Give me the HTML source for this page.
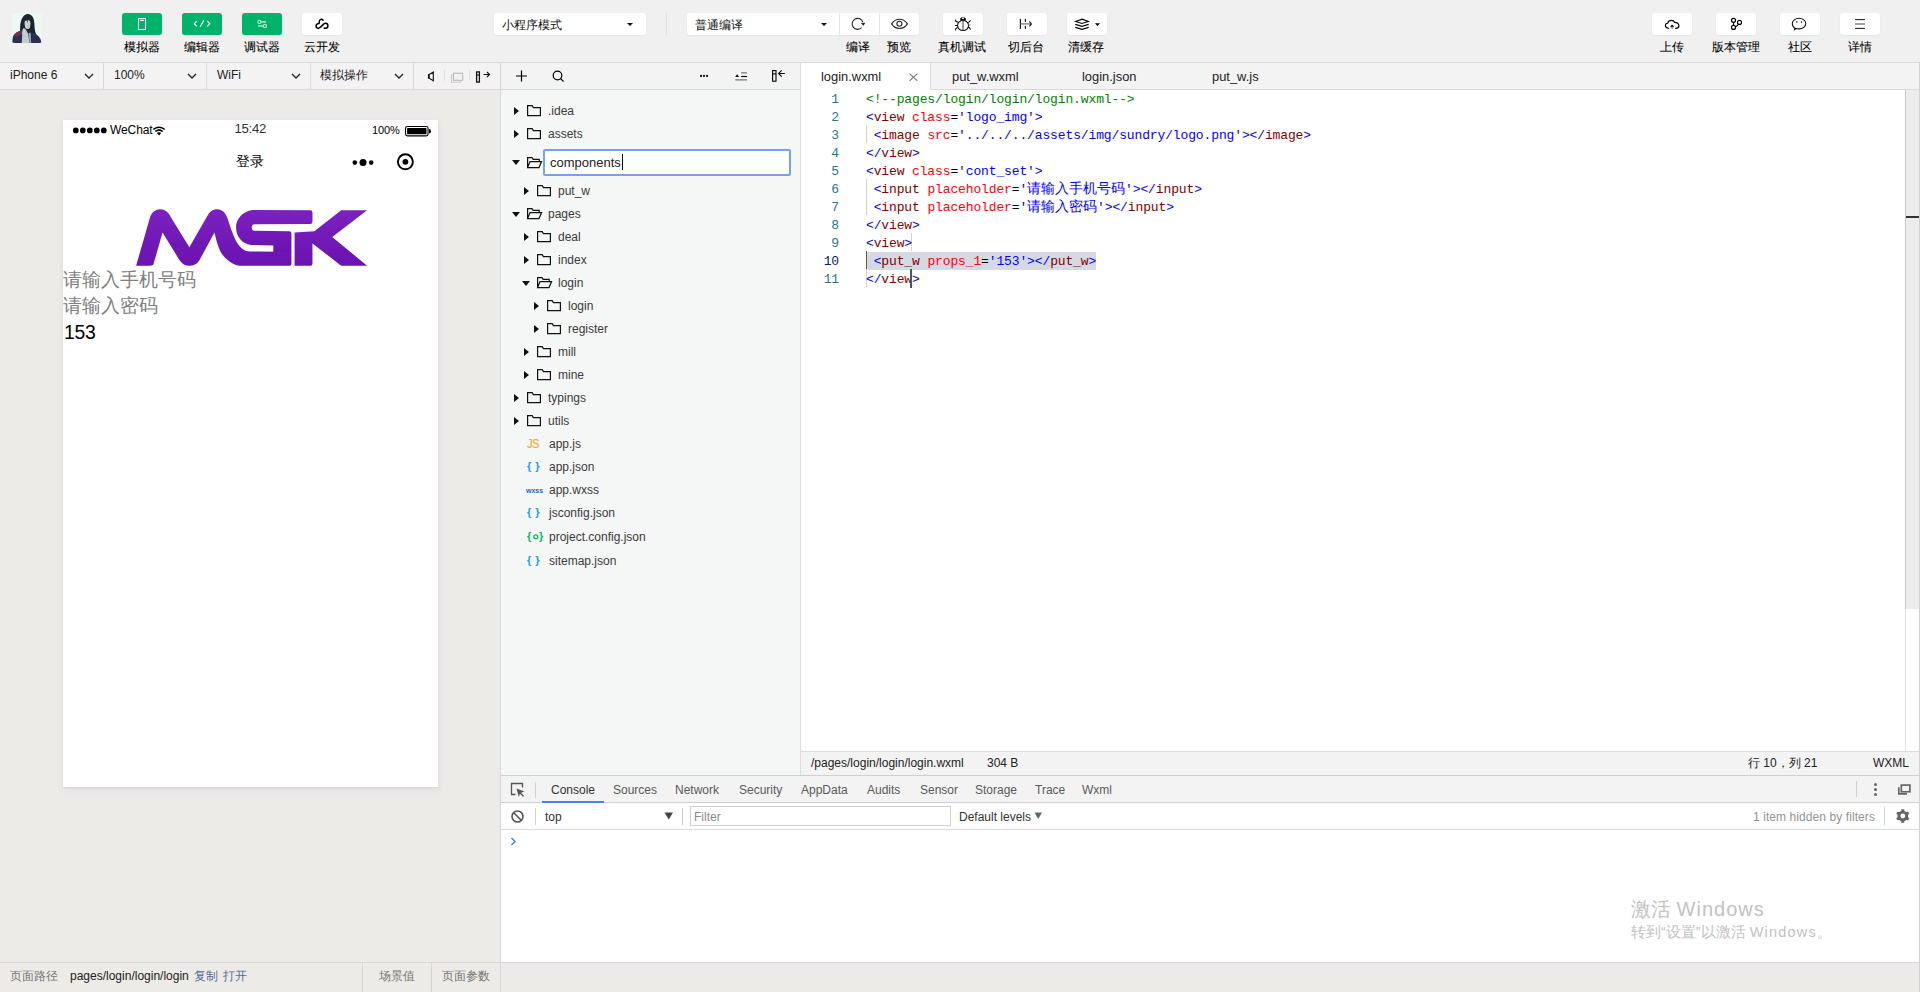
<!DOCTYPE html>
<html><head><meta charset="utf-8">
<style>
*{margin:0;padding:0;box-sizing:border-box}
html,body{width:1920px;height:992px;overflow:hidden;background:#f0f0f0;font-family:"Liberation Sans",sans-serif;font-size:12px;color:#333;position:relative}
.a{position:absolute}
svg{position:absolute;overflow:visible}
.btn{position:absolute;top:13px;width:40px;height:22px;border-radius:3px;background:#fff;box-shadow:0 1px 2px rgba(0,0,0,0.05)}
.g{background:#00b26a}
.lbl{position:absolute;top:40px;width:80px;text-align:center;font-size:12px;color:#000;line-height:14px;-webkit-text-stroke:0.08px #000}
.sel{position:absolute;top:13px;height:22px;border-radius:3px;background:#fff;box-shadow:0 1px 2px rgba(0,0,0,0.05)}
.vsep{position:absolute;width:1px;background:#dcdcdc}
/* bar2 */
.bar2{left:0;top:62px;width:1920px;height:28px;background:#f3f3f3;border-top:1px solid #d9d9d9;border-bottom:1px solid #d9d9d9}
.st{position:absolute;top:68px;font-size:12px;color:#222;line-height:14px}
.sim{left:0;top:90px;width:500px;height:872px;background:#edebe7}
.tree{left:501px;top:90px;width:299px;height:685px;background:#f5f7f6}
.ed{left:801px;top:90px;width:1119px;height:661px;background:#fff}
.bot{left:0;top:962px;width:1920px;height:30px;background:#edebe7;border-top:1px solid #d6d6d6}
.row{position:absolute;font-size:12px;color:#3a3a3a;line-height:14px;white-space:nowrap}
.tri{position:absolute;width:0;height:0;border-top:4px solid transparent;border-bottom:4px solid transparent;border-left:5px solid #111}
.trid{position:absolute;width:0;height:0;border-left:4.5px solid transparent;border-right:4.5px solid transparent;border-top:5px solid #111}
.code{position:absolute;left:866px;font-family:"Liberation Mono",monospace;font-size:13px;letter-spacing:-0.13px;line-height:18px;white-space:pre;color:#000}
.ln{position:absolute;left:810px;width:29px;text-align:right;font-family:"Liberation Mono",monospace;font-size:13px;letter-spacing:-0.13px;line-height:18px;color:#237893}
.cm{color:#008000}.dl{color:#0000ff}.tg{color:#800000}.at{color:#ff0000}.vl{color:#0000ff}
.dt{position:absolute;top:783px;font-size:12px;color:#333;line-height:14px}
</style></head><body>
<!-- ============ TOP TOOLBAR ============ -->
<svg style="left:12px;top:13px" width="30" height="30" viewBox="0 0 30 30">
<defs><clipPath id="avc"><rect width="30" height="30" rx="2.5"/></clipPath></defs>
<g clip-path="url(#avc)">
<rect width="30" height="30" fill="#eff7f3"/>
<path d="M9.5 30 C8.5 24 7.6 18 8.3 12 C8.8 6 11.5 1.2 15.8 0.9 C20 1 22.3 5 22.4 11 C22.5 16 23 20 25.5 24 L26 30 Z" fill="#1c2527"/>
<path d="M12.6 9 C13.2 7.4 15 6.8 16.8 7.2 C18 7.6 18.6 9 18.4 11 L17.9 14.5 C17.3 16 15.5 16.5 14 15.6 C13 14.6 12.5 12.5 12.6 9 Z" fill="#c6d1d6"/>
<path d="M13.5 7.5 C14.5 6.2 15.4 6 15.9 6.2 L15.6 10.5 L14.8 7.6 Z" fill="#2a3437"/>
<path d="M15.2 12.2 L16.4 12.2 L16.2 12.8 L15.3 12.8 Z" fill="#b77b86"/>
<path d="M0 30 L0.8 24.5 C1.5 21 4.5 18.8 8.5 18.2 L11.5 18.5 L19.5 19.5 C23.5 20 26.5 22.5 28.5 26 L29.6 30 Z" fill="#283250"/>
<path d="M2.6 22.5 C3.5 19.5 6.5 17.6 10.2 17.8 L11.2 20.8 C8.6 21.8 6 23 3.8 24.4 Z" fill="#6d2e4f"/>
<path d="M11 15.5 C12.5 14.8 14 16 14.6 18 L16.2 21 L17.5 30 L9.8 30 L10.2 22 C10 19.5 10.2 17 11 15.5 Z" fill="#c4cdd4"/>
<path d="M16.6 20 L17.6 30 L19.2 30 L18.6 19.8 Z" fill="#9ea7b6"/>
</g></svg>
<div class="btn g" style="left:122px"></div>
<svg style="left:122px;top:13px" width="40" height="22"><rect x="16.5" y="5.5" width="7" height="11" fill="none" stroke="#fff" stroke-width="1"/><line x1="18.1" y1="7.4" x2="22" y2="7.4" stroke="#fff" stroke-width="1.3"/></svg>
<div class="btn g" style="left:182px"></div>
<svg style="left:182px;top:13px" width="40" height="22" fill="none" stroke="#fff" stroke-width="1.1"><path d="M14.7 8.2 L12.3 10.75 L14.7 13.3"/><path d="M25.4 8.2 L27.8 10.75 L25.4 13.3"/><path d="M21.8 7.4 L18.1 13.8"/></svg>
<div class="btn g" style="left:242px"></div>
<svg style="left:242px;top:13px" width="40" height="22" fill="none" stroke="#a8e3c8" stroke-width="1.6"><line x1="18.6" y1="8.9" x2="24" y2="8.9"/><line x1="16" y1="13" x2="21.2" y2="13"/><circle cx="17.4" cy="8.9" r="1.6" stroke-width="1.2"/><circle cx="22.9" cy="13" r="1.6" stroke-width="1.2"/></svg>
<div class="btn" style="left:302px"></div>
<svg style="left:302px;top:13px" width="40" height="22" fill="none" stroke="#000" stroke-width="1.5" stroke-linecap="round" stroke-linejoin="round"><path d="M21.1 7.2 C20.4 6.3 19.2 6.1 18.3 6.6 C17.3 7.2 17 8.6 17.1 10.6 C15.6 10.3 14.1 11.4 14.1 13 C14.1 14.3 15.1 15.3 16.3 15.3 C17.2 15.3 17.9 14.8 18.5 14.1 L21.6 11.1 C22.2 10.5 22.8 10.3 23.5 10.3 C24.9 10.3 25.9 11.5 25.9 12.8 C25.9 14.3 24.8 15.3 23.5 15.3 C23 15.3 22.6 15.2 22.2 15"/></svg>
<div class="lbl" style="left:102px">模拟器</div>
<div class="lbl" style="left:162px">编辑器</div>
<div class="lbl" style="left:222px">调试器</div>
<div class="lbl" style="left:282px">云开发</div>

<div class="sel" style="left:494px;width:152px"></div>
<div class="a" style="left:502px;top:17.5px;font-size:12px;color:#111;line-height:14px">小程序模式</div>
<div class="trid" style="left:627px;top:23px;border-left-width:3px;border-right-width:3px;border-top-width:3px"></div>
<div class="vsep" style="left:666px;top:13px;height:22px;background:#dedede"></div>

<div class="sel" style="left:687px;width:232px"></div>
<div class="a" style="left:695px;top:17.5px;font-size:12px;color:#111;line-height:14px">普通编译</div>
<div class="trid" style="left:820.5px;top:23px;border-left-width:3px;border-right-width:3px;border-top-width:3px"></div>
<div class="vsep" style="left:839px;top:13px;height:22px;background:#e6e6e6"></div>
<div class="vsep" style="left:879px;top:13px;height:22px;background:#e6e6e6"></div>
<svg style="left:840px;top:13px" width="40" height="22" fill="none" stroke="#222" stroke-width="1.1"><path d="M22.9 9.2 A5.5 5.5 0 1 0 21.6 14.7"/><path d="M21.3 10.2 L24.9 10.1 L23.3 12.4 Z" fill="#222" stroke-width="0.6"/></svg>
<svg style="left:880px;top:13px" width="40" height="22" fill="none" stroke="#222" stroke-width="1.1"><path d="M11.6 10.9 C13.8 7.6 16.6 6.3 19.5 6.3 C22.4 6.3 25.2 7.6 27.4 10.9 C25.2 14.2 22.4 15.5 19.5 15.5 C16.6 15.5 13.8 14.2 11.6 10.9 Z"/><circle cx="19.4" cy="10.8" r="2.5"/></svg>
<div class="lbl" style="left:818px">编译</div>
<div class="lbl" style="left:859px">预览</div>

<div class="btn" style="left:943px"></div>
<svg style="left:943px;top:13px" width="40" height="22" fill="none" stroke="#000" stroke-width="1.05"><ellipse cx="20.05" cy="12.45" rx="5.5" ry="5.1"/><path d="M17.3 7.3 L17.3 5.6 L18.2 4.6 L21.9 4.6 L22.8 5.6 L22.8 7.3 Z" fill="#000" stroke="none"/><ellipse cx="20.05" cy="5.6" rx="1.3" ry="0.55" fill="#fff" stroke="none"/><line x1="20.05" y1="7.5" x2="20.05" y2="17.3" stroke="#777" stroke-width="1.5"/><path d="M12.4 6.6 L12.9 8.3 L15 9.3 M27.6 7.3 L25.4 9.6 M12.1 12.4 L14.6 12.4 M12.4 17.3 L13 15.3 L14.8 14.4 M27.6 16.5 L26.4 14.7 L25.2 14.2"/><line x1="25.5" y1="12.1" x2="27.6" y2="12.1" stroke="#888" stroke-width="1.3"/></svg>
<div class="btn" style="left:1007px"></div>
<svg style="left:1007px;top:13px" width="40" height="22" fill="none" stroke="#111" stroke-width="1.15" stroke-linecap="round"><line x1="13.4" y1="6.4" x2="13.4" y2="15.4"/><line x1="18.4" y1="6.4" x2="18.4" y2="8.4"/><line x1="18.4" y1="13.4" x2="18.4" y2="15.4"/><line x1="13.6" y1="10.9" x2="23.6" y2="10.9" stroke="#8a8a8a" stroke-width="1.5" stroke-linecap="butt"/><path d="M22.4 8.4 L24.4 10.9 L22.4 13.4" stroke-linecap="butt"/></svg>
<div class="btn" style="left:1067px"></div>
<svg style="left:1067px;top:13px" width="40" height="22" fill="none" stroke="#000" stroke-width="1.1"><path d="M8.6 8.4 L15 6.2 L21.4 8.4 L15 10.4 Z"/><path d="M8.3 11.4 L15 13.4 L21.7 11.4"/><path d="M8.3 14.4 L15 16.4 L21.7 14.4"/><path d="M28 10.3 L33 10.3 L30.5 13.1 Z" fill="#000" stroke="none"/></svg>
<div class="lbl" style="left:922px">真机调试</div>
<div class="lbl" style="left:986px">切后台</div>
<div class="lbl" style="left:1046px">清缓存</div>

<div class="btn" style="left:1652px"></div>
<svg style="left:1652px;top:13px" width="40" height="22" fill="none" stroke="#000" stroke-width="1.15" stroke-linecap="round"><path d="M16.6 15.3 C15 15.1 13.4 14.3 13.4 12.6 C13.4 11.2 14.4 10.3 15.6 10.2 C16.3 8.3 17.4 7.4 19.5 7.4 C21.2 7.4 22.2 8.3 22.7 9.4 C25 9.3 26.9 10.6 26.9 12.7 C26.9 14.4 25.4 15.3 23.6 15.3"/><path d="M20.1 15.4 L20.1 12.8" stroke="#666"/><path d="M18.9 13.6 L20.1 12.4 L21.3 13.6" stroke-width="1.1"/></svg>
<div class="btn" style="left:1716px"></div>
<svg style="left:1716px;top:13px" width="40" height="22" fill="none" stroke="#000" stroke-width="1.15"><circle cx="17.5" cy="7.3" r="2"/><circle cx="17.5" cy="14.4" r="2"/><circle cx="23.5" cy="9.4" r="2"/><path d="M17.5 9.3 L17.5 12.4 M19.4 13.6 Q21.2 13.4 22.4 11.2"/></svg>
<div class="btn" style="left:1780px"></div>
<svg style="left:1780px;top:13px" width="40" height="22" fill="none" stroke="#111" stroke-width="1.1"><path d="M15 15.2 C13.2 14.2 12.3 12.5 12.3 10.6 C12.3 7.6 15.3 5.3 19.05 5.3 C22.8 5.3 25.8 7.6 25.8 10.6 C25.8 13.6 22.8 15.9 19.05 15.9 C17.9 15.9 17 15.8 16 15.5 L14.3 16.9 Z" stroke-linejoin="round"/><circle cx="16.8" cy="8.9" r="0.75" fill="#000" stroke="none"/><circle cx="21.5" cy="8.9" r="0.75" fill="#000" stroke="none"/></svg>
<div class="btn" style="left:1840px"></div>
<svg style="left:1840px;top:13px" width="40" height="22" stroke="#222" stroke-width="1.1"><line x1="15" y1="6.6" x2="25" y2="6.6"/><line x1="15" y1="11" x2="25" y2="11" stroke="#555"/><line x1="15" y1="15.4" x2="25" y2="15.4"/></svg>
<div class="lbl" style="left:1632px">上传</div>
<div class="lbl" style="left:1696px">版本管理</div>
<div class="lbl" style="left:1760px">社区</div>
<div class="lbl" style="left:1820px">详情</div>

<!-- ============ BAR 2 ============ -->
<div class="a bar2"></div>

<div class="a st" style="left:10px">iPhone 6</div>
<svg style="left:84px;top:73px" width="10" height="6" fill="none" stroke="#222" stroke-width="1.3"><path d="M1 1 L5 5 L9 1"/></svg>
<div class="vsep" style="left:103px;top:63px;height:26px;background:#d9d9d9"></div>
<div class="a st" style="left:114px">100%</div>
<svg style="left:187px;top:73px" width="10" height="6" fill="none" stroke="#222" stroke-width="1.3"><path d="M1 1 L5 5 L9 1"/></svg>
<div class="vsep" style="left:206px;top:63px;height:26px;background:#d9d9d9"></div>
<div class="a st" style="left:217px">WiFi</div>
<svg style="left:291px;top:73px" width="10" height="6" fill="none" stroke="#222" stroke-width="1.3"><path d="M1 1 L5 5 L9 1"/></svg>
<div class="vsep" style="left:310px;top:63px;height:26px;background:#d9d9d9"></div>
<div class="a st" style="left:320px">模拟操作</div>
<svg style="left:394px;top:73px" width="10" height="6" fill="none" stroke="#222" stroke-width="1.3"><path d="M1 1 L5 5 L9 1"/></svg>
<div class="vsep" style="left:413px;top:63px;height:26px;background:#d9d9d9"></div>
<svg style="left:420px;top:66px" width="80" height="20" fill="none" stroke="#111" stroke-width="1.1">
<path d="M9.2 8.5 L13.3 6 L13.3 14.8 L9.2 12.3 Z M9.2 8.5 L8.5 8.5 L8.5 12.3 L9.2 12.3"/>
<line x1="24.5" y1="3.5" x2="24.5" y2="15" stroke="#e0e0e0" stroke-width="1"/>
<rect x="33.5" y="7.3" width="9.2" height="7" stroke="#bbb"/><path d="M33.5 9 L31.5 9 L31.5 16.2 L40.5 16.2 L40.5 14.3" stroke="#ccc"/>
<line x1="49.5" y1="4" x2="49.5" y2="14.5" stroke="#e0e0e0" stroke-width="1"/>
<rect x="56.6" y="5.9" width="2.8" height="10.2" stroke-width="1.3"/><line x1="56.6" y1="9" x2="59.4" y2="9" stroke-width="1.1"/><path d="M63.5 8.5 L69.5 8.5 M67 6 L69.5 8.5 L67 11"/>
</svg>
<div class="vsep" style="left:500px;top:63px;height:929px;background:#d6d6d6"></div>
<!-- tree toolbar -->
<svg style="left:501px;top:63px" width="299" height="26" fill="none" stroke="#222" stroke-width="1.1">
<path d="M20.5 7.5 L20.5 18.5 M15 13 L26 13" stroke="#000" stroke-width="1.2"/>
<circle cx="56.5" cy="12.5" r="4.3" stroke="#000" stroke-width="1.2"/><path d="M59.6 15.6 L62.5 18.5" stroke="#000" stroke-width="1.2"/>
<circle cx="200" cy="12.9" r="1.05" fill="#000" stroke="none"/><circle cx="203" cy="12.9" r="1.05" fill="#000" stroke="none"/><circle cx="206.1" cy="12.9" r="1.05" fill="#000" stroke="none"/>
<path d="M234.2 14 L236.1 11.2 L238 14 Z" fill="#000" stroke="none"/>
<path d="M240.2 9.9 L246 9.9 M234.2 16.9 L246 16.9" stroke="#777" stroke-width="1.1"/><path d="M240.2 13.5 L246 13.5" stroke="#000" stroke-width="1.1"/>
<rect x="271.6" y="7.6" width="3.4" height="10.6" stroke="#000" stroke-width="1.1"/><path d="M271.6 10.9 L275 10.9" stroke="#000"/><path d="M277.6 10.4 L283.8 10.4 M280.7 7.3 L277.6 10.4 L280.7 13.6" stroke="#000" stroke-width="1.05"/>
</svg>
<!-- tabs -->
<div class="a" style="left:801px;top:63px;width:129px;height:27px;background:#fff"></div>
<div class="vsep" style="left:930px;top:63px;height:27px;background:#dcdcdc"></div>
<div class="a st" style="left:821px;top:69.5px;font-size:12.9px">login.wxml</div>
<svg style="left:907px;top:72px" width="12" height="12" stroke="#777" stroke-width="1.1"><path d="M2.6 1.6 L10.4 8.9 M10.4 1.6 L2.6 8.9"/></svg>
<div class="a st" style="left:952px;top:69.5px;font-size:12.9px">put_w.wxml</div>
<div class="a st" style="left:1082px;top:69.5px;font-size:12.9px">login.json</div>
<div class="a st" style="left:1212px;top:69.5px;font-size:12.9px">put_w.js</div>
<div class="vsep" style="left:800px;top:63px;height:712px;background:#dcdcdc"></div>

<div class="a sim"></div>
<div class="a" style="left:63px;top:120px;width:375px;height:667px;background:#fff;box-shadow:0 1px 2px rgba(0,0,0,0.07),0 3px 8px rgba(0,0,0,0.05)"></div>
<svg style="left:72px;top:125px" width="40" height="11" fill="#000"><circle cx="3.8" cy="5.4" r="2.85"/><circle cx="10.8" cy="5.4" r="2.85"/><circle cx="17.8" cy="5.4" r="2.85"/><circle cx="24.8" cy="5.4" r="2.85"/><circle cx="31.8" cy="5.4" r="2.85"/></svg>
<div class="a" style="left:110px;top:122.5px;font-size:12px;line-height:14px;color:#000;letter-spacing:-0.1px">WeChat</div>
<svg style="left:152px;top:124.5px" width="14" height="12" fill="#000"><path d="M7 10.5 L4.8 8 C6 6.9 8 6.9 9.2 8 Z"/><path d="M2.8 6 C5.2 3.8 8.8 3.8 11.2 6 L10.1 7.1 C8.3 5.5 5.7 5.5 3.9 7.1 Z"/><path d="M0.8 4 C4.3 0.6 9.7 0.6 13.2 4 L12.1 5.1 C9.2 2.3 4.8 2.3 1.9 5.1 Z"/></svg>
<div class="a" style="left:234.5px;top:121px;font-size:13.2px;line-height:15px;color:#333;letter-spacing:-0.3px">15:42</div>
<div class="a" style="left:372px;top:123.5px;font-size:11px;line-height:13px;color:#000;letter-spacing:-0.15px">100%</div>
<svg style="left:403px;top:124px" width="30" height="14"><rect x="2.55" y="2.55" width="22.5" height="9.3" rx="1.8" fill="none" stroke="#000" stroke-width="1.1"/><rect x="4.1" y="4.1" width="19.4" height="6.2" rx="0.6" fill="#000"/><path d="M26 5 Q28 5 28 7.2 Q28 9.4 26 9.4 Z" fill="#000"/></svg>
<div class="a" style="left:230px;top:153px;width:40px;text-align:center;font-size:14px;line-height:16px;color:#000">登录</div>
<svg style="left:348px;top:155px" width="30" height="14" fill="#000"><circle cx="6.8" cy="7.6" r="2.3"/><circle cx="15" cy="7.4" r="3.5"/><circle cx="23.2" cy="7.6" r="2.3"/></svg>
<svg style="left:395px;top:152px" width="20" height="20"><circle cx="10.4" cy="9.8" r="7.5" fill="none" stroke="#000" stroke-width="1.9"/><circle cx="10.4" cy="9.8" r="2.9" fill="#000"/></svg>
<svg style="left:130px;top:200px" width="245" height="72" viewBox="0 0 1920 564">
<defs><linearGradient id="pg" x1="0" y1="0" x2="0" y2="1"><stop offset="0" stop-color="#7b21c0"/><stop offset="1" stop-color="#6a13b0"/></linearGradient></defs>
<g fill="url(#pg)">
<path d="M48 515 L160 125 Q185 72 235 72 Q280 72 305 110 L465 370 L615 110 Q640 72 682 72 Q740 72 764 142 C790 220 812 290 838 332 Q878 402 939 404 L1265 406 L1265 495 Q1265 515 1245 515 Z"/>
<path d="M959 78 L1412 80 Q1430 80 1430 98 L1430 170 Q1430 188 1412 188 L975 190 Q954 192 954 215 Q954 239 975 241 L1247 245 Q1265 245 1265 263 L1265 409 L1123 409 L1123 357 L949 352 C880 345 831 290 831 214 C831 150 880 90 959 78 Z"/>
<path d="M1290 255 L1445 245 L1655 80 L1858 80 L1585 290 L1858 515 L1655 515 L1430 340 L1430 495 Q1430 515 1410 515 L1290 515 Z"/>
</g>
<g fill="#fff">
<path d="M255 255 L375 450 Q410 516 465 517 L465 540 L140 540 L150 517 Q180 517 185 500 Z"/>
<path d="M662 255 C680 330 700 420 754 460 C790 490 820 510 857 517 L857 540 L465 540 L465 517 Q520 515 545 470 Z"/>
</g>
</svg>
<div class="a" style="left:63px;top:267px;font-size:18.6px;line-height:26px;color:#808080;white-space:nowrap">请输入手机号码</div>
<div class="a" style="left:63px;top:293px;font-size:18.6px;line-height:26px;color:#808080;white-space:nowrap">请输入密码</div>
<div class="a" style="left:64px;top:319px;font-size:19.4px;line-height:26px;color:#000;white-space:nowrap;letter-spacing:-0.3px">153</div>
<div class="a tree"></div>
<div class="tri" style="left:514px;top:106.5px"></div>
<svg style="left:527px;top:104.5px" width="15" height="12" fill="none" stroke="#111" stroke-width="1.2"><path d="M0.6 0.6 L5.2 0.6 L6.4 2.6 L13.4 2.6 L13.4 10.6 L0.6 10.6 Z"/></svg>
<div class="row" style="left:548px;top:104px">.idea</div>
<div class="tri" style="left:514px;top:129.5px"></div>
<svg style="left:527px;top:127.5px" width="15" height="12" fill="none" stroke="#111" stroke-width="1.2"><path d="M0.6 0.6 L5.2 0.6 L6.4 2.6 L13.4 2.6 L13.4 10.6 L0.6 10.6 Z"/></svg>
<div class="row" style="left:548px;top:127px">assets</div>
<div class="trid" style="left:512px;top:160px"></div>
<svg style="left:527px;top:156.5px" width="16" height="12" fill="none" stroke="#111" stroke-width="1.2"><path d="M0.6 10.6 L0.6 0.6 L5 0.6 L6.2 2.4 L12.2 2.4 L12.2 4.6 M0.6 10.6 L3 4.6 L14.6 4.6 L12 10.6 Z"/></svg>
<div class="tri" style="left:524px;top:186.5px"></div>
<svg style="left:537px;top:184.5px" width="15" height="12" fill="none" stroke="#111" stroke-width="1.2"><path d="M0.6 0.6 L5.2 0.6 L6.4 2.6 L13.4 2.6 L13.4 10.6 L0.6 10.6 Z"/></svg>
<div class="row" style="left:558px;top:184px">put_w</div>
<div class="trid" style="left:512px;top:212px"></div>
<svg style="left:527px;top:207.5px" width="16" height="12" fill="none" stroke="#111" stroke-width="1.2"><path d="M0.6 10.6 L0.6 0.6 L5 0.6 L6.2 2.4 L12.2 2.4 L12.2 4.6 M0.6 10.6 L3 4.6 L14.6 4.6 L12 10.6 Z"/></svg>
<div class="row" style="left:548px;top:207px">pages</div>
<div class="tri" style="left:524px;top:232.5px"></div>
<svg style="left:537px;top:230.5px" width="15" height="12" fill="none" stroke="#111" stroke-width="1.2"><path d="M0.6 0.6 L5.2 0.6 L6.4 2.6 L13.4 2.6 L13.4 10.6 L0.6 10.6 Z"/></svg>
<div class="row" style="left:558px;top:230px">deal</div>
<div class="tri" style="left:524px;top:255.5px"></div>
<svg style="left:537px;top:253.5px" width="15" height="12" fill="none" stroke="#111" stroke-width="1.2"><path d="M0.6 0.6 L5.2 0.6 L6.4 2.6 L13.4 2.6 L13.4 10.6 L0.6 10.6 Z"/></svg>
<div class="row" style="left:558px;top:253px">index</div>
<div class="trid" style="left:522px;top:281px"></div>
<svg style="left:537px;top:276.5px" width="16" height="12" fill="none" stroke="#111" stroke-width="1.2"><path d="M0.6 10.6 L0.6 0.6 L5 0.6 L6.2 2.4 L12.2 2.4 L12.2 4.6 M0.6 10.6 L3 4.6 L14.6 4.6 L12 10.6 Z"/></svg>
<div class="row" style="left:558px;top:276px">login</div>
<div class="tri" style="left:534px;top:301.5px"></div>
<svg style="left:547px;top:299.5px" width="15" height="12" fill="none" stroke="#111" stroke-width="1.2"><path d="M0.6 0.6 L5.2 0.6 L6.4 2.6 L13.4 2.6 L13.4 10.6 L0.6 10.6 Z"/></svg>
<div class="row" style="left:568px;top:299px">login</div>
<div class="tri" style="left:534px;top:324.5px"></div>
<svg style="left:547px;top:322.5px" width="15" height="12" fill="none" stroke="#111" stroke-width="1.2"><path d="M0.6 0.6 L5.2 0.6 L6.4 2.6 L13.4 2.6 L13.4 10.6 L0.6 10.6 Z"/></svg>
<div class="row" style="left:568px;top:322px">register</div>
<div class="tri" style="left:524px;top:347.5px"></div>
<svg style="left:537px;top:345.5px" width="15" height="12" fill="none" stroke="#111" stroke-width="1.2"><path d="M0.6 0.6 L5.2 0.6 L6.4 2.6 L13.4 2.6 L13.4 10.6 L0.6 10.6 Z"/></svg>
<div class="row" style="left:558px;top:345px">mill</div>
<div class="tri" style="left:524px;top:370.5px"></div>
<svg style="left:537px;top:368.5px" width="15" height="12" fill="none" stroke="#111" stroke-width="1.2"><path d="M0.6 0.6 L5.2 0.6 L6.4 2.6 L13.4 2.6 L13.4 10.6 L0.6 10.6 Z"/></svg>
<div class="row" style="left:558px;top:368px">mine</div>
<div class="tri" style="left:514px;top:393.5px"></div>
<svg style="left:527px;top:391.5px" width="15" height="12" fill="none" stroke="#111" stroke-width="1.2"><path d="M0.6 0.6 L5.2 0.6 L6.4 2.6 L13.4 2.6 L13.4 10.6 L0.6 10.6 Z"/></svg>
<div class="row" style="left:548px;top:391px">typings</div>
<div class="tri" style="left:514px;top:416.5px"></div>
<svg style="left:527px;top:414.5px" width="15" height="12" fill="none" stroke="#111" stroke-width="1.2"><path d="M0.6 0.6 L5.2 0.6 L6.4 2.6 L13.4 2.6 L13.4 10.6 L0.6 10.6 Z"/></svg>
<div class="row" style="left:548px;top:414px">utils</div>
<div class="a" style="left:527px;top:436px;font-size:13.5px;line-height:16px;color:#f5a623;letter-spacing:-0.8px;transform:scaleX(0.85);transform-origin:left">JS</div>
<div class="row" style="left:549px;top:437px">app.js</div>
<div class="a" style="left:527px;top:459px;font-size:11px;font-weight:bold;line-height:14px;color:#1b9be6;letter-spacing:0.5px">{ }</div>
<div class="row" style="left:549px;top:460px">app.json</div>
<div class="a" style="left:526px;top:487px;font-size:7px;font-weight:bold;line-height:8px;color:#1468c5">wxss</div>
<div class="row" style="left:549px;top:483px">app.wxss</div>
<div class="a" style="left:527px;top:505px;font-size:11px;font-weight:bold;line-height:14px;color:#1b9be6;letter-spacing:0.5px">{ }</div>
<div class="row" style="left:549px;top:506px">jsconfig.json</div>
<div class="a" style="left:527px;top:529px;font-size:11px;font-weight:bold;line-height:14px;color:#0fb26b">{</div>
<div class="a" style="left:539px;top:529px;font-size:11px;font-weight:bold;line-height:14px;color:#0fb26b">}</div>
<svg style="left:532px;top:533px" width="8" height="8" fill="none" stroke="#0fb26b" stroke-width="1.3"><circle cx="3.8" cy="3.8" r="2"/></svg>
<div class="row" style="left:549px;top:530px">project.config.json</div>
<div class="a" style="left:527px;top:553px;font-size:11px;font-weight:bold;line-height:14px;color:#1b9be6;letter-spacing:0.5px">{ }</div>
<div class="row" style="left:549px;top:554px">sitemap.json</div>
<div class="a" style="left:543px;top:149px;width:248px;height:27px;background:#fff;border:2px solid #74a3ea;border-radius:2px"></div>
<div class="a" style="left:550px;top:155px;font-size:13px;line-height:15px;color:#222">components</div>
<div class="a" style="left:622px;top:154px;width:1px;height:16px;background:#000"></div>
<div class="a ed"></div>
<div class="a" style="left:866px;top:251.5px;width:230px;height:18px;background:#d5dae2"></div>
<div class="a" style="left:866px;top:125px;width:1px;height:18px;background:#d3d3d3"></div>
<div class="a" style="left:866px;top:179px;width:1px;height:18px;background:#d3d3d3"></div>
<div class="a" style="left:866px;top:197px;width:1px;height:18px;background:#d3d3d3"></div>
<div class="a" style="left:866px;top:251px;width:1px;height:18px;background:#5a5a5a"></div>
<div class="a" style="left:866px;top:269px;width:1px;height:18px;background:#d3d3d3"></div>
<div class="a" style="left:911px;top:233px;width:1px;height:18px;background:#d3d3d3"></div>
<div class="ln" style="top:91px;color:#237893">1</div>
<div class="code" style="top:91px"><span class="cm">&lt;!--pages/login/login/login.wxml--&gt;</span></div>
<div class="ln" style="top:109px;color:#237893">2</div>
<div class="code" style="top:109px"><span class="dl">&lt;</span><span class="tg">view</span> <span class="at">class</span>=<span class="vl">'logo_img'</span><span class="dl">&gt;</span></div>
<div class="ln" style="top:127px;color:#237893">3</div>
<div class="code" style="top:127px"> <span class="dl">&lt;</span><span class="tg">image</span> <span class="at">src</span>=<span class="vl">'../../../assets/img/sundry/logo.png'</span><span class="dl">&gt;&lt;/</span><span class="tg">image</span><span class="dl">&gt;</span></div>
<div class="ln" style="top:145px;color:#237893">4</div>
<div class="code" style="top:145px"><span class="dl">&lt;/</span><span class="tg">view</span><span class="dl">&gt;</span></div>
<div class="ln" style="top:163px;color:#237893">5</div>
<div class="code" style="top:163px"><span class="dl">&lt;</span><span class="tg">view</span> <span class="at">class</span>=<span class="vl">'cont_set'</span><span class="dl">&gt;</span></div>
<div class="ln" style="top:181px;color:#237893">6</div>
<div class="code" style="top:181px"> <span class="dl">&lt;</span><span class="tg">input</span> <span class="at">placeholder</span>=<span class="vl">'<span style="font-size:14px;letter-spacing:0;line-height:0">请输入手机号码</span>'</span><span class="dl">&gt;&lt;/</span><span class="tg">input</span><span class="dl">&gt;</span></div>
<div class="ln" style="top:199px;color:#237893">7</div>
<div class="code" style="top:199px"> <span class="dl">&lt;</span><span class="tg">input</span> <span class="at">placeholder</span>=<span class="vl">'<span style="font-size:14px;letter-spacing:0;line-height:0">请输入密码</span>'</span><span class="dl">&gt;&lt;/</span><span class="tg">input</span><span class="dl">&gt;</span></div>
<div class="ln" style="top:217px;color:#237893">8</div>
<div class="code" style="top:217px"><span class="dl">&lt;/</span><span class="tg">view</span><span class="dl">&gt;</span></div>
<div class="ln" style="top:235px;color:#237893">9</div>
<div class="code" style="top:235px"><span class="dl">&lt;</span><span class="tg">view</span><span class="dl">&gt;</span></div>
<div class="ln" style="top:253px;color:#0b216f">10</div>
<div class="code" style="top:253px"> <span class="dl">&lt;</span><span class="tg">put_w</span> <span class="at">props_1</span>=<span class="vl">'153'</span><span class="dl">&gt;&lt;/</span><span class="tg">put_w</span><span class="dl">&gt;</span></div>
<div class="ln" style="top:271px;color:#237893">11</div>
<div class="code" style="top:271px"><span class="dl">&lt;/</span><span class="tg">view</span><span class="dl">&gt;</span></div>
<div class="a" style="left:910px;top:269px;width:2px;height:19px;background:#4b5563"></div>
<div class="a" style="left:1905px;top:90px;width:14px;height:661px;background:#fff;border-left:1px solid #e2e2e2"></div><div class="a" style="left:1905px;top:90px;width:14px;height:519px;background:#ececec;border-left:1px solid #c9c9c9"></div>
<div class="a" style="left:1906px;top:216px;width:14px;height:2px;background:#333"></div>
<div class="a" style="left:801px;top:751px;width:1119px;height:24px;background:#f3f3f3;border-top:1px solid #dcdcdc"></div>
<div class="a" style="left:811px;top:756px;font-size:12px;line-height:14px;color:#222">/pages/login/login/login.wxml</div>
<div class="a" style="left:987px;top:756px;font-size:12px;line-height:14px;color:#222">304 B</div>
<div class="a" style="left:1748px;top:756px;font-size:12px;line-height:14px;color:#222">行 10，列 21</div>
<div class="a" style="left:1873px;top:756px;font-size:12px;line-height:14px;color:#222">WXML</div>
<div class="a" style="left:501px;top:775px;width:1419px;height:187px;background:#fff"></div>
<div class="a" style="left:501px;top:775px;width:1419px;height:28px;background:#f3f3f3;border-top:1px solid #cfcfcf;border-bottom:1px solid #cfcfcf"></div>
<svg style="left:509px;top:781px" width="18" height="18" fill="none" stroke="#555" stroke-width="1.3"><path d="M6.5 13.5 L2.5 13.5 L2.5 2.5 L13.5 2.5 L13.5 6.5"/><path d="M7.5 7.5 L15.5 10.5 L12 11.8 L15 14.8 L14 15.8 L11 12.8 L9.8 16 Z" fill="#555" stroke="none"/></svg>
<div class="a" style="left:535px;top:782px;width:1px;height:16px;background:#d0d0d0"></div>
<div class="a dt" style="left:551px;color:#333">Console</div>
<div class="a dt" style="left:613px;color:#5a5a5a">Sources</div>
<div class="a dt" style="left:675px;color:#5a5a5a">Network</div>
<div class="a dt" style="left:739px;color:#5a5a5a">Security</div>
<div class="a dt" style="left:801px;color:#5a5a5a">AppData</div>
<div class="a dt" style="left:867px;color:#5a5a5a">Audits</div>
<div class="a dt" style="left:920px;color:#5a5a5a">Sensor</div>
<div class="a dt" style="left:975px;color:#5a5a5a">Storage</div>
<div class="a dt" style="left:1035px;color:#5a5a5a">Trace</div>
<div class="a dt" style="left:1082px;color:#5a5a5a">Wxml</div>
<div class="a" style="left:542px;top:801px;width:62px;height:1.6px;background:#3f84f4"></div>
<div class="a" style="left:1856px;top:781px;width:1px;height:16px;background:#d0d0d0"></div>
<svg style="left:1868px;top:782px" width="14" height="16" fill="#666"><circle cx="7.5" cy="2.5" r="1.5"/><circle cx="7.5" cy="7.5" r="1.5"/><circle cx="7.5" cy="12.5" r="1.5"/></svg>
<svg style="left:1894px;top:782px" width="18" height="16" fill="none" stroke="#666" stroke-width="1.7"><rect x="7.3" y="3.1" width="8.6" height="6.7"/><path d="M4.8 5.3 L4.8 11.9 L13 11.9"/></svg>
<div class="a" style="left:501px;top:829px;width:1419px;height:1px;background:#dadada"></div>
<svg style="left:509px;top:808px" width="18" height="18" fill="none" stroke="#555" stroke-width="1.6"><circle cx="8.5" cy="8.5" r="5.5"/><path d="M4.8 4.8 L12.2 12.2"/></svg>
<div class="a" style="left:535px;top:808px;width:1px;height:17px;background:#d0d0d0"></div>
<div class="a" style="left:545px;top:810px;font-size:12px;line-height:14px;color:#333">top</div>
<svg style="left:664px;top:812px" width="10" height="8" fill="#444"><path d="M0.5 0.5 L9 0.5 L4.75 7.5 Z"/></svg>
<div class="a" style="left:682px;top:808px;width:1px;height:17px;background:#d0d0d0"></div>
<div class="a" style="left:690px;top:806px;width:261px;height:20px;border:1px solid #cfcfcf;background:#fff"></div>
<div class="a" style="left:694px;top:810px;font-size:12px;line-height:14px;color:#8a8a8a">Filter</div>
<div class="a" style="left:959px;top:810px;font-size:12px;line-height:14px;color:#333">Default levels</div>
<svg style="left:1034px;top:812px" width="9" height="8" fill="#666"><path d="M0.5 0.5 L8 0.5 L4.25 7 Z"/></svg>
<div class="a" style="left:1753px;top:810px;font-size:12px;line-height:14px;color:#939393;letter-spacing:0.08px">1 item hidden by filters</div>
<div class="a" style="left:1884px;top:807px;width:1px;height:18px;background:#d0d0d0"></div>
<svg style="left:1894px;top:808px" width="18" height="17"><path fill="#666" fill-rule="evenodd" d="M7.28 3.24 L7.36 1.25 L10.24 1.25 L10.32 3.24 L12.17 4.30 L13.93 3.38 L15.36 5.87 L13.68 6.93 L13.68 9.07 L15.36 10.13 L13.93 12.62 L12.17 11.70 L10.32 12.76 L10.24 14.75 L7.36 14.75 L7.28 12.76 L5.43 11.70 L3.67 12.62 L2.24 10.13 L3.92 9.07 L3.92 6.93 L2.24 5.87 L3.67 3.38 L5.43 4.30 Z M11.20 8.00 A2.4 2.4 0 1 0 6.40 8.00 A2.4 2.4 0 1 0 11.20 8.00 Z"/><circle cx="8.8" cy="8.0" r="5.3" fill="#666"/><circle cx="8.8" cy="8.0" r="2.4" fill="#fff"/></svg>
<svg style="left:509px;top:836px" width="10" height="12" fill="none" stroke="#3d7de3" stroke-width="1.4"><path d="M2.5 2 L6 5.5 L2.5 9"/></svg>
<div class="a" style="left:1631px;top:897px;font-size:20px;line-height:24px;color:#c2c2c2;white-space:nowrap">激活 <span style="letter-spacing:1px">Windows</span></div>
<div class="a" style="left:1631px;top:924px;font-size:14.5px;line-height:17px;color:#c2c2c2;white-space:nowrap">转到“设置”以激活 <span style="letter-spacing:1.2px">Windows</span>。</div>
<div class="a bot"></div>
<div class="a" style="left:10px;top:969px;font-size:12px;line-height:14px;color:#777">页面路径</div>
<div class="a" style="left:70px;top:969px;font-size:12px;line-height:14px;color:#222">pages/login/login/login</div>
<div class="a" style="left:194px;top:969px;font-size:12px;line-height:14px;color:#576b95">复制</div>
<div class="a" style="left:223px;top:969px;font-size:12px;line-height:14px;color:#576b95">打开</div>
<div class="a" style="left:362px;top:963px;width:1px;height:29px;background:#d6d6d6"></div>
<div class="a" style="left:379px;top:969px;font-size:12px;line-height:14px;color:#777">场景值</div>
<div class="a" style="left:431px;top:963px;width:1px;height:29px;background:#d6d6d6"></div>
<div class="a" style="left:442px;top:969px;font-size:12px;line-height:14px;color:#777">页面参数</div>
<div class="a" style="left:500px;top:963px;width:1px;height:29px;background:#d6d6d6"></div>
<div class="a" style="left:1919px;top:62px;width:1px;height:930px;background:#d2d2d2"></div>
</body></html>
